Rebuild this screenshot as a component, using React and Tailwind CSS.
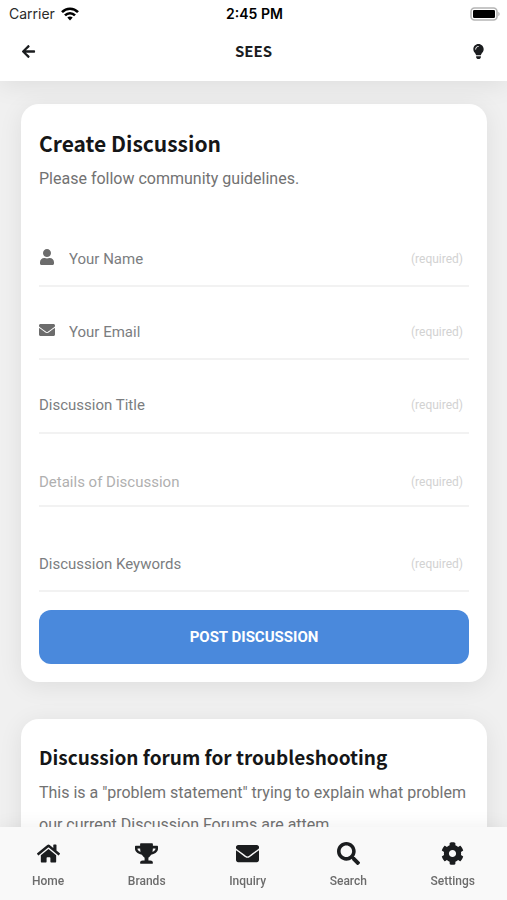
import { FaArrowLeft, FaCog, FaEnvelope, FaHome, FaLightbulb, FaSearch, FaTrophy, FaUser } from 'react-icons/fa';

const FIELDS = [
    { id: 'name', label: 'Your Name', type: 'text', icon: FaUser, box: 'h-[73px] pt-[18px]', color: 'placeholder:text-[#7b7d80]' },
    { id: 'email', label: 'Your Email', type: 'email', icon: FaEnvelope, box: 'h-[73px] pt-[18px]', color: 'placeholder:text-[#7b7d80]' },
    { id: 'title', label: 'Discussion Title', type: 'text', box: 'h-[74px] pt-[18px]', color: 'placeholder:text-[#7b7d80]' },
    { id: 'details', label: 'Details of Discussion', multiline: true, box: 'h-[73px] pt-6', color: 'placeholder:text-[#b0b0b0]' },
    { id: 'keywords', label: 'Discussion Keywords', type: 'text', box: 'h-[85px] pt-[30px]', color: 'placeholder:text-[#7b7d80]' },
];

const TABS = [
    { label: 'Home', icon: FaHome },
    { label: 'Brands', icon: FaTrophy },
    { label: 'Inquiry', icon: FaEnvelope },
    { label: 'Search', icon: FaSearch },
    { label: 'Settings', icon: FaCog },
];

function StatusBar() {
    return (
        <div className="grid grid-cols-3 items-center h-7 pl-[9px] pr-[7px] font-['Inter',sans-serif] text-sm text-black">
            <div className="flex items-center gap-1.5">
                <span className="text-[#2b2b2b]">Carrier</span>
                <svg width="18" height="14" viewBox="0 0 18 14" fill="none" stroke="currentColor" strokeWidth="2.6">
                    <path d="M1 5.2C5.4 0.6 12.6 0.6 17 5.2" />
                    <path d="M4 8.4C6.8 5.5 11.2 5.5 14 8.4" />
                    <path d="M6.3 10.6C7.8 9.1 10.2 9.1 11.7 10.6L9 13.6Z" fill="currentColor" stroke="none" />
                </svg>
            </div>
            <span className="text-center font-semibold whitespace-nowrap">2:45 PM</span>
            <svg className="justify-self-end" width="30" height="14" viewBox="0 0 30 14">
                <rect x="1" y="1" width="26" height="12" rx="3.5" fill="#fff" stroke="#b5b5b5" strokeWidth="1.6" />
                <rect x="3" y="3" width="22" height="8" rx="1.2" fill="#000" />
                <path d="M28.4 4.8C30 5.6 30 8.4 28.4 9.2Z" fill="#a9a9a9" />
            </svg>
        </div>
    );
}

function Header() {
    return (
        <header className="sticky top-0 z-10 h-[81px] bg-white shadow-[0_4px_24px_rgba(0,0,0,0.08)]">
            <StatusBar />
            <div className="flex items-center justify-between h-[46px] px-5 text-[#1b1d1f]">
                <button type="button" aria-label="Back" className="w-4 flex justify-center">
                    <FaArrowLeft size={15} />
                </button>
                <h1 className="font-['Noto_Sans_CJK_SC',sans-serif] text-[15px] font-bold">SEES</h1>
                <button type="button" aria-label="Toggle theme" className="w-4 flex justify-center">
                    <FaLightbulb size={15} />
                </button>
            </div>
        </header>
    );
}

function Field({ id, label, type, icon: Icon, multiline, box, color }) {
    const inputClass = `flex-1 min-w-0 h-9 bg-transparent outline-none text-[15px] text-[#1b1d1f] ${color}`;

    return (
        <label htmlFor={id} className={`flex items-center border-b-2 border-[#f2f2f2] ${box}`}>
            {Icon && (
                <span className="w-[30px] pb-1 text-[#6c6c6c]">
                    <Icon size={16} />
                </span>
            )}
            {multiline ? (
                <textarea id={id} rows={1} aria-label={label} placeholder={label} className={`${inputClass} resize-none py-1.5 leading-6`} />
            ) : (
                <input id={id} type={type} aria-label={label} placeholder={label} className={inputClass} />
            )}
            <span className="pr-1.5 text-xs text-[#d2d2d2]">(required)</span>
        </label>
    );
}

function Card({ children }) {
    return (
        <section className="rounded-[18px] bg-white px-[18px] shadow-[0_4px_24px_rgba(0,0,0,0.08)]">
            {children}
        </section>
    );
}

function TabBar() {
    return (
        <nav className="fixed inset-x-0 bottom-0 z-10 flex justify-between h-[73px] px-8 pt-[15px] bg-[#f9f9f9]/98 shadow-[0_0_18px_rgba(0,0,0,0.07)]">
            {TABS.map(({ label, icon: Icon }) => (
                <a key={label} href="#" className="flex flex-col items-center gap-1.5 text-[#1b1d1f]">
                    <Icon size={23} />
                    <span className="text-xs leading-5 font-medium text-[#6c6c6c]">{label}</span>
                </a>
            ))}
        </nav>
    );
}

export default function App() {
    return (
        <div className="min-h-screen bg-[#f0f0f0] font-['Roboto',sans-serif]">
            <Header />
            <main className="flex flex-col gap-[37px] pl-[21px] pr-5 pt-[23px]">
                <Card>
                    <h2 className="pt-[23px] font-['Noto_Sans_CJK_SC',sans-serif] text-[21px] leading-8 font-bold text-[#151617]">
                        Create Discussion
                    </h2>
                    <p className="pt-1 text-base leading-8 text-[#727272]">Please follow community guidelines.</p>
                    <form className="pt-[19px] pb-[18px]" onSubmit={(e) => e.preventDefault()}>
                        {FIELDS.map((field) => (
                            <Field key={field.id} {...field} />
                        ))}
                        <button
                            type="submit"
                            className="w-full h-[54px] mt-[18px] rounded-xl bg-[#4a89dc] text-[15px] font-bold text-white"
                        >
                            POST DISCUSSION
                        </button>
                    </form>
                </Card>

                <Card>
                    <h2 className="pt-[22px] font-['Noto_Sans_CJK_SC',sans-serif] text-[19px] leading-8 font-bold text-[#151617]">
                        Discussion forum for troubleshooting
                    </h2>
                    <p className="pt-1 pb-4 text-base leading-8 text-[#727272]">
                        This is a "problem statement" trying to explain what problem our current Discussion Forums are attem
                    </p>
                </Card>
            </main>
            <TabBar />
        </div>
    );
}
